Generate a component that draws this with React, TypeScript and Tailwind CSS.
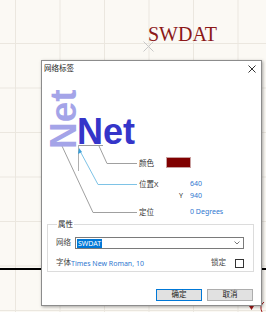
import { useState } from "react";

const cjk = "font-['Noto_Sans','Noto_Sans_CJK_SC',sans-serif]";

const Diagram = () => (
  <div className="relative h-[142px] w-full">
    <svg className="absolute left-0 top-0" width="221" height="142">
      <line x1="36" y1="68.5" x2="61" y2="68.5" stroke="#9a9a9a" strokeWidth="1" />
      <line x1="36.5" y1="68" x2="36.5" y2="94" stroke="#b0b0b0" strokeWidth="1" />
      <polyline points="57,69 65,86.5 95,86.5" fill="none" stroke="#a0a0a0" strokeWidth="1" />
      <polyline points="20,69 51,135.5 95,135.5" fill="none" stroke="#a0a0a0" strokeWidth="1" />
      <polyline points="38,74 56,107.5 95,107.5" fill="none" stroke="#7ec3e6" strokeWidth="1" />
      <polygon points="37,71 36,77 40,75" fill="#3a9fd8" />
    </svg>
    <span className="absolute left-[9px] top-[72px] origin-top-left -rotate-90 font-['Liberation_Sans',sans-serif] text-[37px] font-bold leading-[26px] text-[#a4a4e8]">
      Net
    </span>
    <span className="absolute left-[35px] top-[42px] font-['Liberation_Sans',sans-serif] text-[36px] font-bold leading-[26px] text-[#3535c9]">
      Net
    </span>
    <span className={`absolute left-[97px] top-[81px] text-[7.5px] leading-[10px] text-[#333] ${cjk}`}>颜色</span>
    <div className="absolute left-[124px] top-[80px] h-[11px] w-[25px] border border-[#c9a0a0] bg-[#800000]" />
    <span className={`absolute left-[97px] top-[102px] text-[7.5px] leading-[10px] text-[#333] ${cjk}`}>位置X</span>
    <span className={`absolute left-[148px] top-[102px] text-[7px] leading-[10px] text-[#2f78d0] ${cjk}`}>640</span>
    <span className={`absolute left-[137px] top-[114px] text-[7px] leading-[10px] text-[#333] ${cjk}`}>Y</span>
    <span className={`absolute left-[148px] top-[114px] text-[7px] leading-[10px] text-[#2f78d0] ${cjk}`}>940</span>
    <span className={`absolute left-[97px] top-[130px] text-[7.5px] leading-[10px] text-[#333] ${cjk}`}>定位</span>
    <span className={`absolute left-[148px] top-[130px] text-[7px] leading-[10px] text-[#2f78d0] ${cjk}`}>0 Degrees</span>
  </div>
);

const App = () => {
  const [locked, setLocked] = useState(false);

  return (
    <div className="relative h-[312px] w-[266px] overflow-hidden bg-[#fbf9f4] bg-[linear-gradient(to_right,#ebe7df_1px,transparent_1px),linear-gradient(to_bottom,#ebe7df_1px,transparent_1px)] bg-[size:44.5px_44.5px] bg-[position:15px_43px]">
      <span className="absolute left-[148px] top-[22px] font-['Liberation_Serif',serif] text-[20px] leading-[24px] text-[#8c1818]">
        SWDAT
      </span>
      <svg className="absolute left-[143px] top-[41px]" width="11" height="11">
        <path d="M0.5 0.5 L10.5 10.5 M10.5 0.5 L0.5 10.5" stroke="#c8c8c8" strokeWidth="1" />
      </svg>
      <div className="absolute left-0 top-[268px] h-[2px] w-full bg-black" />
      <svg className="absolute left-[246px] top-[302px]" width="20" height="10">
        <polygon points="3,4 8,4 5.5,8" fill="#a01818" />
        <path d="M18 0 Q13 4 16 10" fill="none" stroke="#a01818" strokeWidth="1" />
      </svg>

      <div className={`absolute left-[41px] top-[60px] flex h-[246px] w-[221px] flex-col border border-[#8c8c8c] bg-white shadow-[1px_1px_3px_rgba(0,0,0,0.35)] ${cjk}`}>
        <div className="flex h-[16px] items-center justify-between pl-[2px] pr-[5px]">
          <span className="text-[7.5px] leading-none text-[#222]">网络标签</span>
          <svg width="8" height="8">
            <path d="M0.5 0.5 L7.5 7.5 M7.5 0.5 L0.5 7.5" stroke="#333" strokeWidth="1" />
          </svg>
        </div>

        <Diagram />

        <fieldset className="ml-[5px] w-[207px] border border-[#dcdcdc] px-[8px] pb-[3px]">
          <legend className="ml-[1px] px-[1px] text-[7.5px] leading-[10px] text-[#222]">属性</legend>
          <div className="mt-[8px] flex h-[12px] items-center">
            <span className="w-[19px] text-[7.5px] leading-none text-[#444]">网络</span>
            <div className="flex h-[12px] w-[169px] items-center justify-between border border-[#7a7a7a] bg-white pl-[1px] pr-[3px]">
              <span className="bg-[#0078d7] px-[1px] text-[7px] leading-[9px] text-white">SWDAT</span>
              <svg width="6" height="4">
                <path d="M0.5 0.5 L3 3 L5.5 0.5" fill="none" stroke="#555" strokeWidth="0.8" />
              </svg>
            </div>
          </div>
          <div className="mt-[9px] flex h-[10px] items-center">
            <span className="text-[7.5px] leading-none text-[#444]">字体</span>
            <span className="text-[7px] leading-none text-[#2f78d0]">Times New Roman, 10</span>
            <span className="ml-auto text-[7.5px] leading-none text-[#444]">锁定</span>
            <button
              className="ml-[9px] mr-[1px] h-[9px] w-[9px] border border-[#333] bg-white"
              onClick={() => setLocked(!locked)}
            >
              {locked && <span className="block h-full w-full bg-[#333]" />}
            </button>
          </div>
        </fieldset>

        <div className="mt-[17px] flex justify-end gap-[5px] pr-[8px]">
          <button className="flex h-[12px] w-[46px] items-center justify-center border border-[#0078d7] bg-[#e1e1e1] text-[7.5px] leading-none text-[#222]">
            确定
          </button>
          <button className="flex h-[12px] w-[46px] items-center justify-center border border-[#adadad] bg-[#e1e1e1] text-[7.5px] leading-none text-[#222]">
            取消
          </button>
        </div>
      </div>
    </div>
  );
};

export default App;
